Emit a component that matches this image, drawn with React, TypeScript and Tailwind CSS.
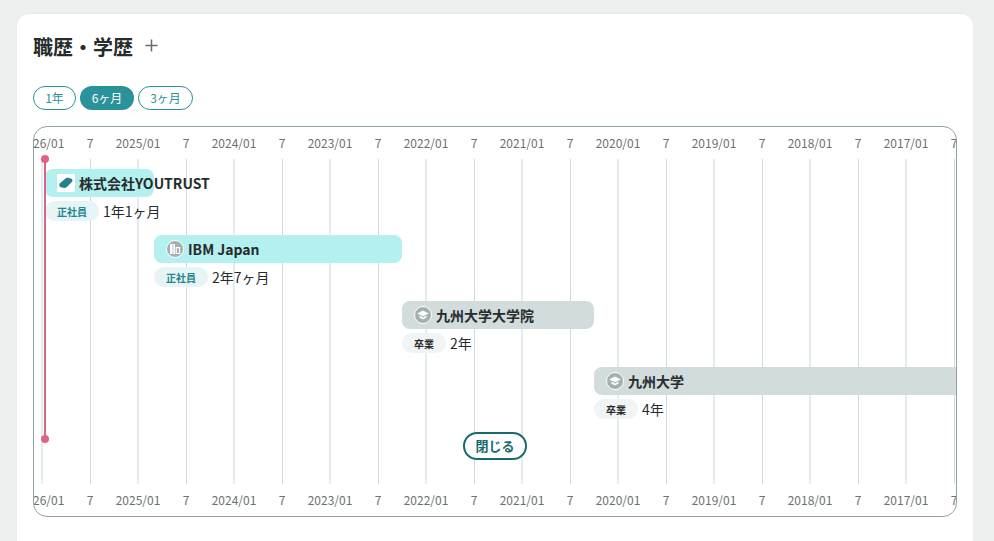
const FONT = '"Noto Sans CJK JP", "Noto Sans", sans-serif';

const LABELS = ['2026/01','7','2025/01','7','2024/01','7','2023/01','7','2022/01','7','2021/01','7','2020/01','7','2019/01','7','2018/01','7','2017/01','7'];

function Labels() {
  return (
    <div className="flex h-8 ml-[-16px] shrink-0">
      {LABELS.map((l, i) => (
        <div key={i} className="w-12 shrink-0 flex items-center justify-center text-[12px] text-[#6b7070] whitespace-nowrap">{l}</div>
      ))}
    </div>
  );
}

function Grid() {
  return (
    <div className="absolute left-[-16px] top-8 bottom-8 flex">
      {LABELS.map((l, i) => (
        <div key={i} className="w-12 shrink-0 flex justify-center">
          <div className={i % 2 === 0 ? 'w-[2px] h-full bg-[#e3eded]' : 'w-px h-full bg-[#cddcdc]'} />
        </div>
      ))}
    </div>
  );
}

function CompanyIcon() {
  return (
    <div className="w-[18px] h-[18px] bg-white flex items-center justify-center shrink-0">
      <svg width="14" height="12" viewBox="0 0 14 12">
        <path d="M0.8 6.6 L5.6 2.2 C6.8 1 8.2 0.6 9.8 1 L11.8 1.6 C13.6 2.2 14 3.8 12.8 5 L8.4 9.4 C7.2 10.6 5.6 11.2 4 10.8 L1.8 10.2 C0.2 9.6 -0.2 7.8 0.8 6.6Z" fill="#23818a" />
      </svg>
    </div>
  );
}

function BuildingIcon() {
  return (
    <div className="w-[18px] h-[18px] rounded-full bg-[#a4afaf] border border-white flex items-center justify-center shrink-0">
      <svg width="12" height="12" viewBox="0 0 12 12" fill="none">
        <rect x="1" y="1" width="2.6" height="10" fill="#fff" />
        <rect x="4.3" y="1" width="1.6" height="10" fill="#fff" />
        <path d="M6.6 4H11.2V11H6.6Z M7.8 5.2V10H10V5.2Z" fill="#fff" fillRule="evenodd" />
      </svg>
    </div>
  );
}

function SchoolIcon() {
  return (
    <div className="w-[18px] h-[18px] rounded-full bg-[#a4afaf] border border-white flex items-center justify-center shrink-0">
      <svg width="12" height="10" viewBox="0 0 12 10">
        <path d="M6 0.5 L11.8 3.4 L6 6.3 L0.2 3.4Z" fill="#fff" />
        <path d="M2.4 5.6 L6 7.4 L9.6 5.6 V7.4 L6 9.4 L2.4 7.4Z" fill="#fff" />
      </svg>
    </div>
  );
}

function Row({ left, width, name, icon, barClass, badge, badgeClass, period }: any) {
  return (
    <div className="h-[66px] shrink-0" style={{ marginLeft: left }}>
      <div className={`h-7 flex items-center gap-1 pl-3 ${barClass}`} style={{ width }}>
        {icon}
        <span className="text-[14px] font-bold text-[#262b2b] whitespace-nowrap">{name}</span>
      </div>
      <div className="flex items-center gap-1 mt-[4px] h-5">
        <span className={`h-5 rounded-full flex items-center justify-center text-[10px] font-bold ${badgeClass}`}>{badge}</span>
        <span className="text-[14px] text-[#262b2b] whitespace-nowrap">{period}</span>
      </div>
    </div>
  );
}

export default function App() {
  return (
    <div className="h-[541px] bg-[#edf0ef] overflow-hidden pt-[14px] pl-[17px] pr-[21px]" style={{ fontFamily: FONT }}>
      <div className="h-[600px] bg-white rounded-t-[12px] shadow-[0_-1px_2px_rgba(0,0,0,0.03)] pt-[18px] px-4">
        <div className="flex items-center h-[30px]">
          <h2 className="text-[20px] leading-[30px] font-bold text-[#262b2b]">職歴・学歴</h2>
          <svg className="ml-3 mb-[3px]" width="13" height="13" viewBox="0 0 13 13">
            <path d="M6.5 0.5V12.5M0.5 6.5H12.5" stroke="#666b6b" strokeWidth="1.5" />
          </svg>
        </div>
        <div className="flex gap-1 mt-[24px]">
          <span className="h-6 w-[43px] rounded-full border border-[#2a929a] text-[#2a929a] text-[12px] flex items-center justify-center">1年</span>
          <span className="h-6 w-[54px] rounded-full bg-[#2a929a] text-white text-[12px] flex items-center justify-center">6ヶ月</span>
          <span className="h-6 w-[55px] rounded-full border border-[#2a929a] text-[#2a929a] text-[12px] flex items-center justify-center">3ヶ月</span>
        </div>
        <div className="mt-4 w-[924px] h-[391px] rounded-[14px] border border-[#8fa3a5] relative overflow-hidden flex flex-col">
          <Grid />
          <div className="relative flex flex-col h-full">
            <Labels />
            <div className="h-[10px] shrink-0" />
            <div className="relative flex-1">
              <div className="absolute left-[10px] top-[-10px] w-[2px] h-[280px] bg-[#dd6485]" />
              <div className="absolute left-[7px] top-[-14px] w-2 h-2 rounded-full bg-[#dd6485]" />
              <div className="absolute left-[7px] top-[266px] w-2 h-2 rounded-full bg-[#dd6485]" />
              <Row left={11} width={109} name="株式会社YOUTRUST" icon={<CompanyIcon />} barClass="bg-[#b4f0f0] rounded-lg" badge="正社員" badgeClass="w-[54px] bg-[#e6f4f5] text-[#23868e]" period="1年1ヶ月" />
              <Row left={120} width={248} name="IBM Japan" icon={<BuildingIcon />} barClass="bg-[#b4f0f0] rounded-lg" badge="正社員" badgeClass="w-[54px] bg-[#e6f4f5] text-[#23868e]" period="2年7ヶ月" />
              <Row left={368} width={192} name="九州大学大学院" icon={<SchoolIcon />} barClass="bg-[#d2dcdc] rounded-lg" badge="卒業" badgeClass="w-11 bg-[#f0f4f4] text-[#262b2b]" period="2年" />
              <Row left={560} width={363} name="九州大学" icon={<SchoolIcon />} barClass="bg-[#d2dcdc] rounded-l-lg" badge="卒業" badgeClass="w-11 bg-[#f0f4f4] text-[#262b2b]" period="4年" />
              <div className="absolute left-[429px] top-[263px] w-16 h-7 rounded-full border-2 border-[#176a6e] bg-white text-[#176a6e] text-[13px] font-bold flex items-center justify-center">閉じる</div>
            </div>
            <Labels />
          </div>
        </div>
      </div>
    </div>
  );
}
